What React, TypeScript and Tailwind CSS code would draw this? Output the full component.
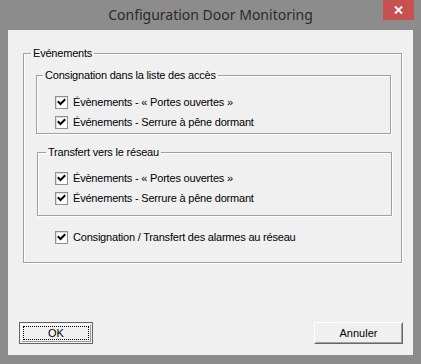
import React from "react";

const font = { fontFamily: '"Liberation Sans", Arial, sans-serif' };

function Check({ label }: { label: string }) {
  return (
    <div className="flex items-center h-[20px]">
      <div className="w-[13px] h-[13px] border border-[#8e8f8f] bg-white flex items-center justify-center shadow-[inset_1px_1px_0_#dcdcdc]">
        <svg width="9" height="9" viewBox="0 0 9 9">
          <path d="M1.5 4 L3.5 6 L7.5 2" stroke="#000" strokeWidth="2" fill="none" strokeLinecap="square" />
        </svg>
      </div>
      <span className="ml-[5px] text-[11px] leading-[14px] tracking-[-0.2px] text-black">{label}</span>
    </div>
  );
}

export default function App() {
  return (
    <div className="w-[421px] h-[364px] bg-[#8c8c8c] flex flex-col" style={font}>
      <div className="relative h-[30px] flex items-center justify-center">
        <span className="text-[14px] text-[#2b2b2b] leading-[20px]" style={{ fontFamily: '"Noto Sans", "Open Sans", sans-serif' }}>
          Configuration Door Monitoring
        </span>
        <div className="absolute top-0 right-[7px] w-[31px] h-[20px] bg-[#c75050] flex items-center justify-center">
          <svg width="9" height="8" viewBox="0 0 9 8">
            <path d="M1 0.5 L8 7.5 M8 0.5 L1 7.5" stroke="#fff" strokeWidth="2" />
          </svg>
        </div>
      </div>
      <div className="mx-[8px] h-[325px] bg-[#f0f0f0] flex flex-col">
        <fieldset className="ml-[15px] mt-[16px] w-[379px] h-[217px] border border-[#a0a0a0] shadow-[inset_1px_1px_0_#fff,1px_1px_0_#fff]">
          <legend className="ml-[7px] px-[2px] text-[11px] leading-[14px] h-[14px] tracking-[-0.2px] text-black">Evénements</legend>
          <fieldset className="ml-[12px] mt-[8px] w-[355px] h-[66px] border border-[#a0a0a0] shadow-[inset_1px_1px_0_#fff,1px_1px_0_#fff]">
            <legend className="ml-[6px] px-[2px] text-[11px] leading-[14px] h-[14px] tracking-[-0.2px] text-black">Consignation dans la liste des accès</legend>
            <div className="ml-[18px] mt-[10px] flex flex-col">
              <Check label="Évènements - « Portes ouvertes »" />
              <Check label="Événements - Serrure à pêne dormant" />
            </div>
          </fieldset>
          <fieldset className="ml-[13px] mt-[11px] w-[355px] h-[71px] border border-[#a0a0a0] shadow-[inset_1px_1px_0_#fff,1px_1px_0_#fff]">
            <legend className="ml-[8px] px-[2px] text-[11px] leading-[14px] h-[14px] tracking-[-0.2px] text-black">Transfert vers le réseau</legend>
            <div className="ml-[17px] mt-[9px] flex flex-col">
              <Check label="Évènements - « Portes ouvertes »" />
              <Check label="Événements - Serrure à pêne dormant" />
            </div>
          </fieldset>
          <div className="ml-[31px] mt-[11px]">
            <Check label="Consignation / Transfert des alarmes au réseau" />
          </div>
        </fieldset>
        <div className="mt-[59px] flex justify-between pl-[11px] pr-[10px]">
          <button className="w-[74px] h-[22px] border border-[#646464] bg-[#f0f0f0] p-[1px]">
            <div className="w-full h-full border border-t-white border-l-white border-r-[#a0a0a0] border-b-[#a0a0a0] p-[1px]">
              <div className="w-full h-full border border-dotted border-black flex items-center justify-center text-[11px] leading-[14px] text-black">
                OK
              </div>
            </div>
          </button>
          <button className="w-[89px] h-[22px] border border-t-white border-l-white border-r-[#696969] border-b-[#696969] bg-[#f0f0f0]">
            <div className="w-full h-full border border-t-[#f0f0f0] border-l-[#f0f0f0] border-r-[#a0a0a0] border-b-[#a0a0a0] flex items-center justify-center text-[11px] leading-[14px] text-black">
              Annuler
            </div>
          </button>
        </div>
      </div>
    </div>
  );
}
